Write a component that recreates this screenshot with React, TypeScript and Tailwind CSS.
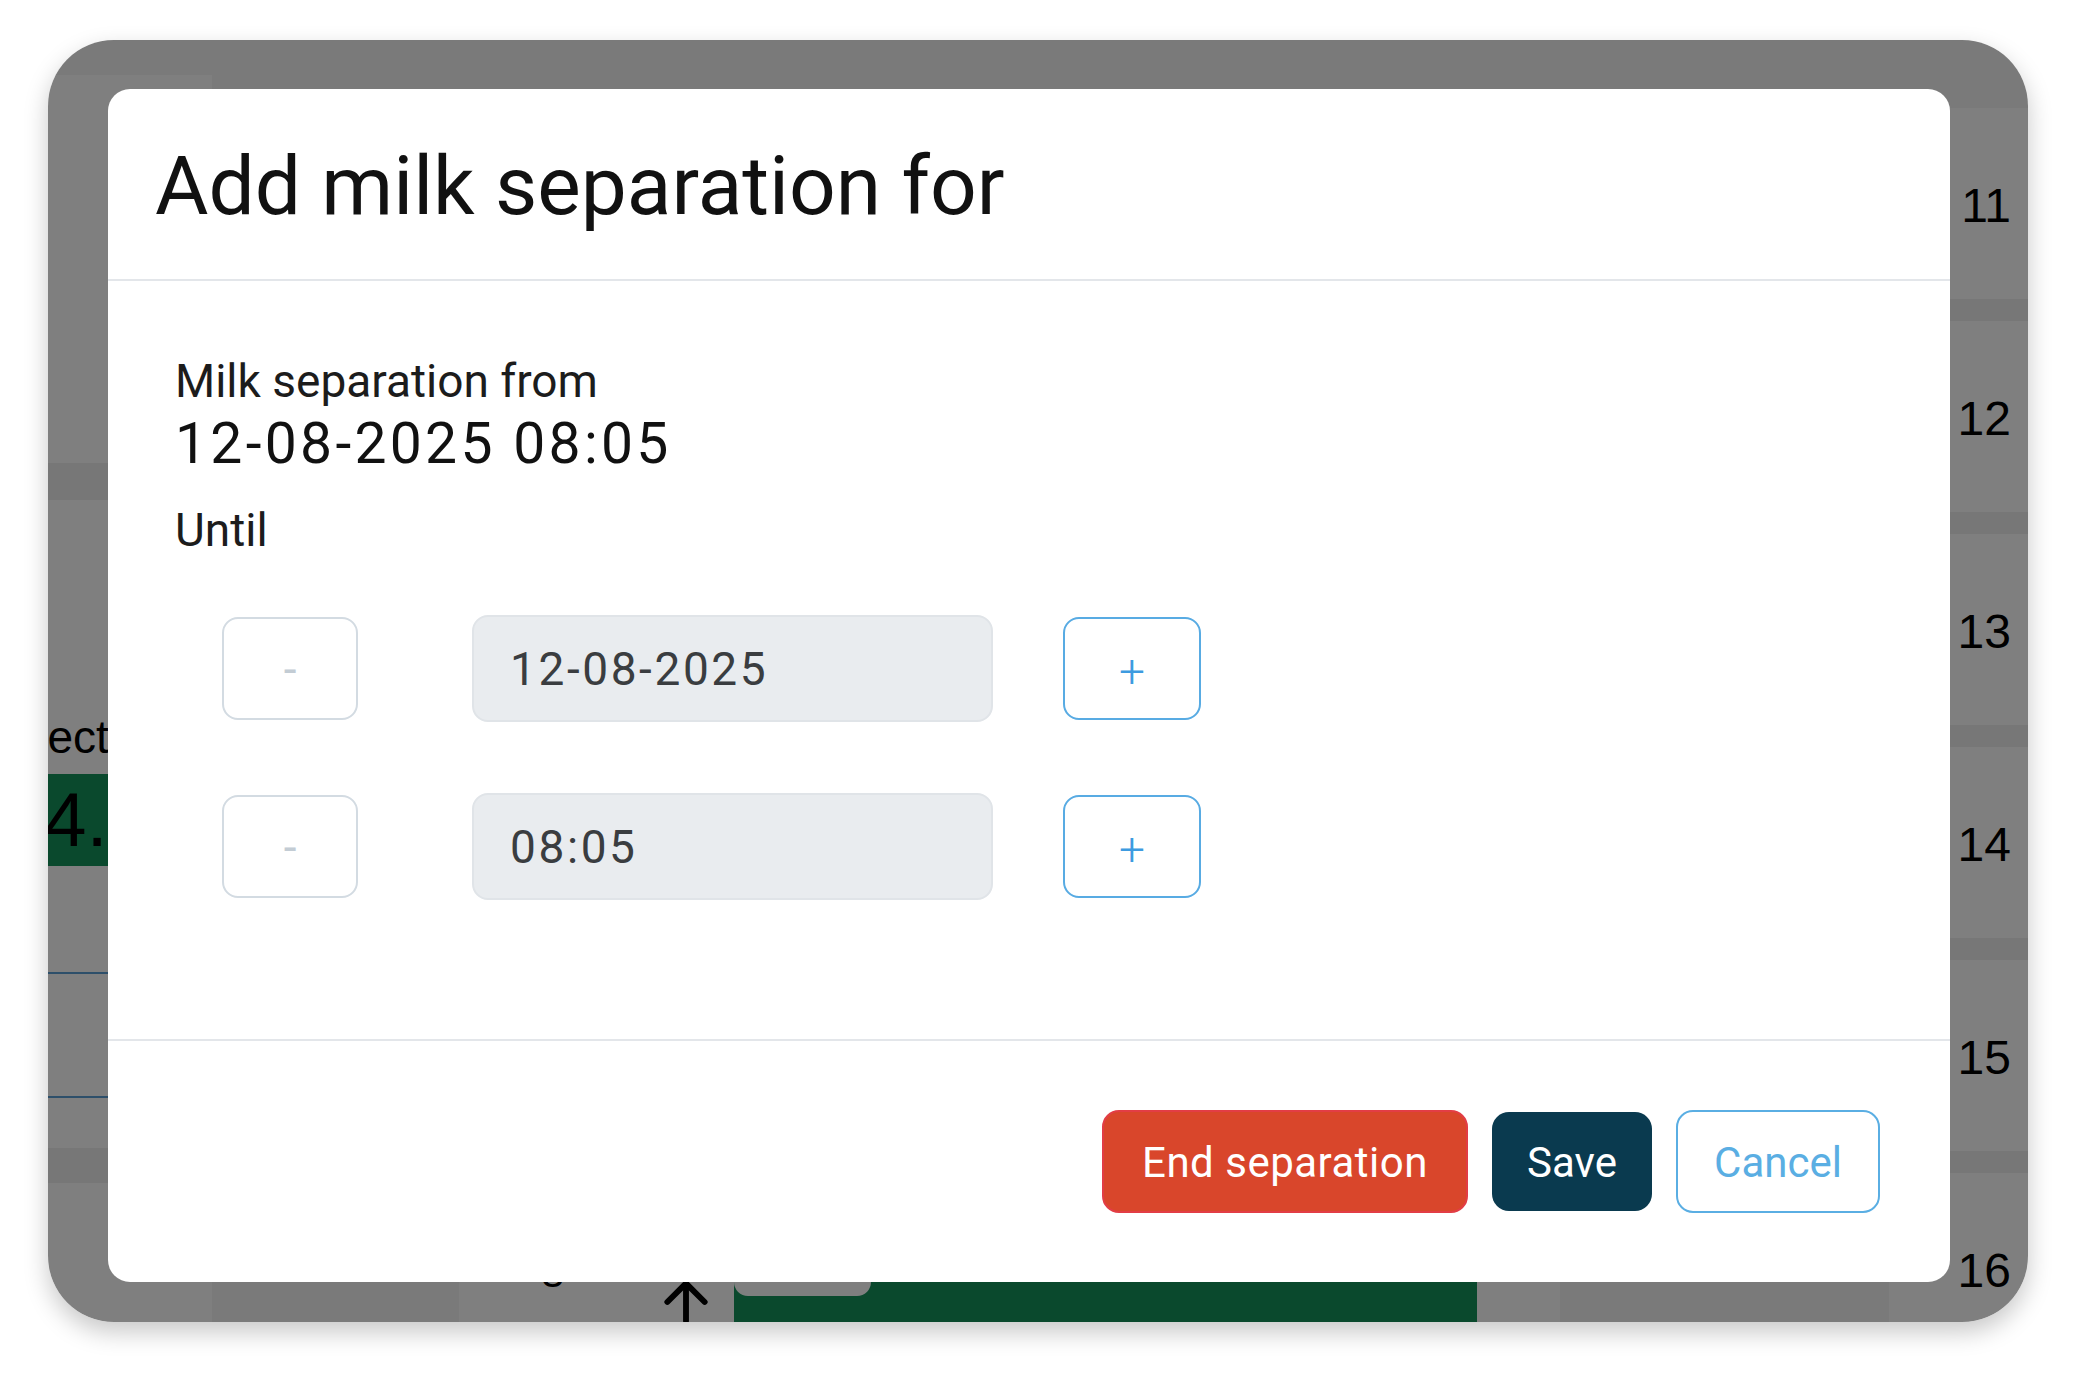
import { ArrowUp } from "lucide-react";

const hours = ["11", "12", "13", "14", "15", "16"];

function Stepper({ value }: { value: string }) {
  return (
    <div className="flex items-center">
      <button className="ml-[47px] flex h-[103px] w-[136px] items-center justify-center rounded-[16px] border-2 border-[#d3dbe2] bg-white text-[46px] leading-none text-[#c3ccd4]">
        -
      </button>
      <div className="ml-[114px] flex h-[107px] w-[521px] items-center rounded-[16px] border-2 border-[#e0e4e8] bg-[#e9ecef] pl-[36px] text-[46px] leading-none tracking-[2.6px] text-[#3a3d40]">
        {value}
      </div>
      <button className="ml-[70px] flex h-[103px] w-[138px] items-center justify-center rounded-[16px] border-2 border-[#58abe3] bg-white pt-[4px] text-[46px] font-light leading-none text-[#3d9be0]">
        +
      </button>
    </div>
  );
}

function Page() {
  return (
    <div className="flex h-full flex-col bg-[#f4f4f4] font-['Liberation_Sans',sans-serif] text-black">
      <div className="h-[35px] shrink-0" />
      <div className="flex min-h-0 flex-1 overflow-hidden">
        {/* left column */}
        <div className="flex w-[164px] flex-col overflow-hidden bg-white">
          <div className="h-[388px] shrink-0" />
          <div className="h-[37px] shrink-0 bg-[#eeeeee]" />
          <div className="flex h-[274px] shrink-0 items-end pb-[14px]">
            <span className="-ml-[67px] whitespace-nowrap text-[46px] leading-none">Select</span>
          </div>
          <div className="flex h-[92px] shrink-0 items-center bg-[#15935b]">
            <span className="-ml-[46px] whitespace-nowrap text-[76px] leading-none">24.</span>
          </div>
          <div className="h-[106px] shrink-0" />
          <div className="h-[2px] shrink-0 bg-[#5a9fd4]" />
          <div className="h-[122px] shrink-0" />
          <div className="h-[2px] shrink-0 bg-[#5a9fd4]" />
          <div className="h-[50px] shrink-0" />
          <div className="h-[35px] shrink-0 bg-[#eeeeee]" />
        </div>

        {/* middle */}
        <div className="flex flex-1 flex-col">
          <div className="flex-1" />
          <div className="flex h-[110px] shrink-0">
            <div className="w-[247px]" />
            <div className="flex w-[275px] overflow-hidden bg-white">
              <span className="ml-[82px] mt-[40px] text-[42px] leading-none">8</span>
              <ArrowUp className="ml-auto mr-[16px] mt-[58px] h-[64px] w-[64px] shrink-0" strokeWidth={2.2} />
            </div>
            <div className="w-[743px] bg-[#15935b]">
              <div className="mt-[24px] h-[60px] w-[137px] rounded-[14px] bg-white" />
            </div>
            <div className="w-[83px] bg-white" />
            <div className="w-[329px]" />
          </div>
        </div>

        {/* hour column */}
        <div className="flex w-[139px] flex-col overflow-hidden bg-white">
          <div className="h-[33px] shrink-0 bg-[#f4f4f4]" />
          {hours.map((h, i) => (
            <div key={h} className="flex shrink-0 flex-col">
              <div className="flex h-[191px] items-center justify-end pr-[17px] pt-[5px] text-[48px] leading-none">
                {h}
              </div>
              {i < hours.length - 1 && <div className="h-[22px] bg-[#eeeeee]" />}
            </div>
          ))}
        </div>
      </div>
    </div>
  );
}

export default function App() {
  return (
    <div className="min-h-screen bg-white pl-[48px] pt-[40px]">
      <div className="relative h-[1282px] w-[1980px] overflow-hidden rounded-[66px] shadow-[0_10px_24px_rgba(0,0,0,0.22)]">
        <Page />

        <div className="absolute inset-0 bg-black/50 pb-[40px] pl-[60px] pr-[78px] pt-[49px]">
          <div className="flex h-full flex-col rounded-[22px] bg-white font-['Roboto',sans-serif] text-[#111]">
            <div className="border-b-2 border-[#e3e6ea] px-[47px] pb-[52px] pt-[56px]">
              <h1 className="text-[82px] leading-none">Add milk separation for</h1>
            </div>

            <div className="flex-1 pl-[67px] pt-[77px]">
              <div className="text-[46px] leading-none text-[#1c1c1c]">Milk separation from</div>
              <div className="mt-[11px] text-[57px] leading-none tracking-[3.3px]">12-08-2025 08:05</div>
              <div className="mt-[35px] text-[46px] leading-none text-[#1c1c1c]">Until</div>
              <div className="mt-[62px] flex flex-col gap-[71px]">
                <Stepper value="12-08-2025" />
                <Stepper value="08:05" />
              </div>
            </div>

            <div className="flex h-[243px] items-center justify-end gap-[24px] border-t-2 border-[#e3e6ea] pr-[70px]">
              <button className="h-[103px] w-[366px] rounded-[17px] border-2 border-[#e23d45] bg-[#d9462b] pt-[2px] text-[42px] leading-none tracking-[0.5px] text-white">
                End separation
              </button>
              <button className="h-[99px] w-[160px] rounded-[17px] bg-[#0a3a4f] pt-[2px] text-[42px] leading-none text-white">
                Save
              </button>
              <button className="h-[103px] w-[204px] rounded-[17px] border-2 border-[#5aaee3] bg-white pt-[2px] text-[42px] leading-none text-[#5aaee3]">
                Cancel
              </button>
            </div>
          </div>
        </div>
      </div>
    </div>
  );
}
